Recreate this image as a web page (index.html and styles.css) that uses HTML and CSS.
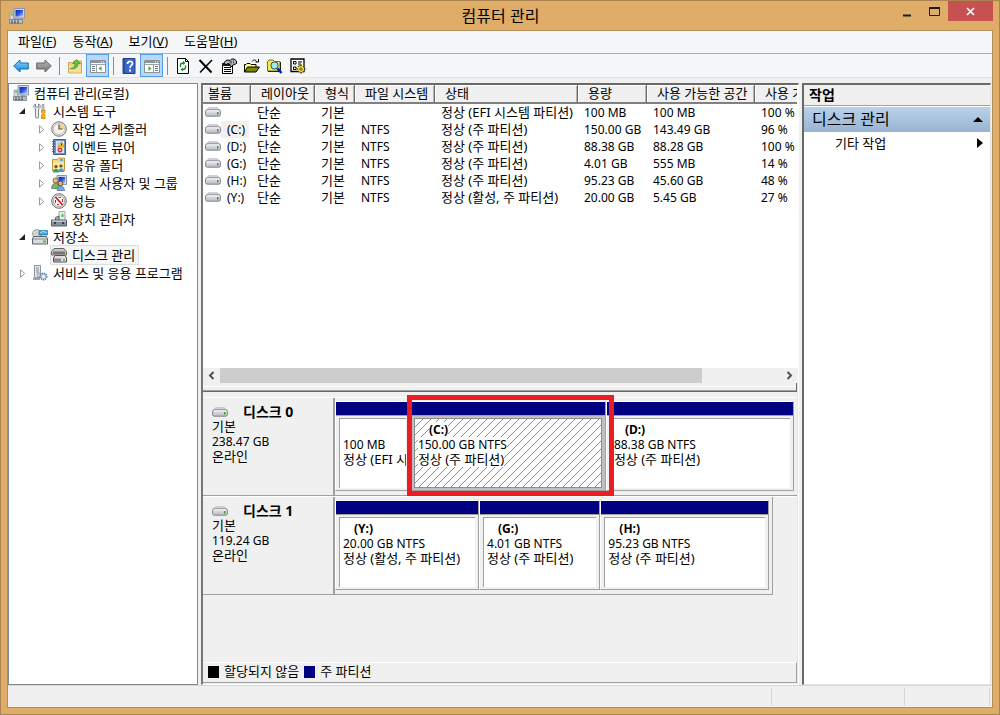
FILE: index.html
```html
<!DOCTYPE html>
<html lang="ko">
<head>
<meta charset="utf-8">
<title>컴퓨터 관리</title>
<link rel="stylesheet" href="styles.css">
</head>
<body>
<svg class="defs" aria-hidden="true">
  <defs>
    <linearGradient id="g-blue" x1="0" y1="0" x2="0" y2="1"><stop offset="0" stop-color="#8fd6fb"/><stop offset="1" stop-color="#1583d6"/></linearGradient>
    <linearGradient id="g-gray" x1="0" y1="0" x2="0" y2="1"><stop offset="0" stop-color="#b5b5b5"/><stop offset="1" stop-color="#777"/></linearGradient>
    <linearGradient id="g-screen" x1="0" y1="0" x2="1" y2="1"><stop offset="0" stop-color="#1226b8"/><stop offset=".5" stop-color="#2a50e0"/><stop offset="1" stop-color="#b8d4ff"/></linearGradient>
    <linearGradient id="g-drive" x1="0" y1="0" x2="0" y2="1"><stop offset="0" stop-color="#e9e9ee"/><stop offset="1" stop-color="#b9bac4"/></linearGradient>
    <pattern id="hatch" width="8" height="8" patternUnits="userSpaceOnUse"><path d="M-1 9 9-1M-1 1 1-1M7 9 9 7" stroke="#8c8c8c" stroke-width="1"/></pattern>
    <symbol id="i-computer" viewBox="0 0 16 16">
      <path d="M5 .5h10.500v9.500H5z" fill="#c9d3e2" stroke="#8b98ae"/><path d="M6.500 2H14v6.500H6.500z" fill="url(#g-screen)"/>
      <path d="M8 10h4v2H8z" fill="#9aa3ae"/><path d="M1 5h3.500v7H1z" fill="#d5dbe2" stroke="#8e979f" stroke-width=".7"/><path d="M2 6h2v1.500H2z" fill="#55c83a"/>
      <path d="M.5 11.500h13v4H.5z" fill="#b6bec6" stroke="#717b85" stroke-width=".8"/><path d="M2 13h9M2 14.500h9" stroke="#59636d" stroke-dasharray="2 1"/>
    </symbol>
    <symbol id="i-tools" viewBox="0 0 16 16">
      <path d="M3.500 1C2 1.500 1.500 3 2 4.500l1.500 1.500v8c0 1.500 3 1.500 3 0V6L8 4.500C8.500 3 8 1.500 6.500 1v3h-3z" fill="#eceef0" stroke="#747a80" stroke-width=".9"/>
      <path d="M10 1.500h2v6.500h-2z" fill="#d4d4d4" stroke="#888" stroke-width=".7"/><path d="M9.500 7.500h3.500v2l-1 1 1 1.500v3.500H9.500V12l1-1.500-1-1z" fill="#f9b516" stroke="#c78700" stroke-width=".8"/>
    </symbol>
    <symbol id="i-clock" viewBox="0 0 16 16">
      <circle cx="8" cy="8" r="7.300" fill="#e4e4e4" stroke="#767676"/><circle cx="8" cy="8" r="5.500" fill="#f8f3e6" stroke="#aaa" stroke-width=".6"/><path d="M8 8V2.500A5.500 5.500 0 0 1 13.500 8z" fill="#f3cf94"/><path d="M8 3.500V8h3.500" fill="none" stroke="#555" stroke-width="1.200"/>
    </symbol>
    <symbol id="i-event" viewBox="0 0 16 16">
      <path d="M2.500.5h12v15h-12z" fill="#6f93c8" stroke="#3c5d8f"/><path d="M5 2h8v12H5z" fill="#dfe8f5"/><path d="M6 4h3M6 6h2M6 8h2" stroke="#8fa6c8" stroke-width=".8"/><path d="M1 2.500h3M1 5h3M1 7.500h3M1 10h3M1 12.500h3" stroke="#56606c"/>
      <path d="M10.500 2.500 13.500 8h-6z" fill="#ffc820" stroke="#a87a00" stroke-width=".5"/><path d="M10.500 4.500v2" stroke="#222"/><circle cx="9" cy="11" r="2.500" fill="#dc3935"/><path d="M7.800 11h2.400" stroke="#fff"/>
    </symbol>
    <symbol id="i-share" viewBox="0 0 16 16">
      <path d="M1.500 2.500h5l1-1.500h6v13h-12z" fill="#f4d67a" stroke="#c19b3a"/><path d="M9 2h3v2H9z" fill="#5fa8e0"/><path d="M2 5h11v8H2z" fill="#fae79f"/>
      <circle cx="5" cy="9.500" r="1.600" fill="#6b4a2c"/><path d="M2 15.500c0-5 6-5 6 0z" fill="#3d9a78"/><circle cx="10" cy="9" r="1.600" fill="#6b4a2c"/><path d="M7.500 15c0-5 5.500-5 5.500 0z" fill="#4b9dc4"/>
    </symbol>
    <symbol id="i-users" viewBox="0 0 16 16">
      <path d="M6 .5h9.500v9H6z" fill="#ccd7e8" stroke="#8595b0"/><path d="M7.500 2H14v6H7.500z" fill="url(#g-screen)"/>
      <circle cx="4.500" cy="5.500" r="2.500" fill="#e9bd82" stroke="#765027" stroke-width=".8"/><path d="M.5 13.500c0-7 8-7 8 0z" fill="#78b56f" stroke="#39713a" stroke-width=".6"/><circle cx="9.500" cy="8.500" r="2.400" fill="#e3ae72" stroke="#5d3c20" stroke-width=".8"/><path d="M6 15.500c0-6 7.500-6 7.500 0z" fill="#7ba4d6" stroke="#365f96" stroke-width=".6"/>
    </symbol>
    <symbol id="i-perf" viewBox="0 0 16 16">
      <circle cx="8" cy="8" r="7.300" fill="#e6e6e6" stroke="#6e6e6e"/><circle cx="8" cy="8" r="5.500" fill="#fff" stroke="#8f8f8f" stroke-width=".8"/><path d="m4.500 4 7 8" stroke="#cf1a20" stroke-width="1.800"/><path d="M4.500 10V7M11.500 9V6M7.500 4.500H10M6 11.500h2" stroke="#cf1a20"/>
    </symbol>
    <symbol id="i-device" viewBox="0 0 16 16">
      <path d="M8 .5h6v9H8z" fill="#e8ebee" stroke="#a0a8af"/><path d="M10.500 3h2v3h-2z" fill="#55bf50"/><path d="M4.500 9V6.500L8 5v4" fill="#a6aeb5" stroke="#5c656e"/><path d="M.5 9h15v6H.5z" fill="#87919b" stroke="#56606a"/><path d="M1 9.500h14v1.500H1z" fill="#bfc7ce"/><path d="M3 11h2v2H3zM11 11h2v2h-2z" fill="#39424b"/>
    </symbol>
    <symbol id="i-storage" viewBox="0 0 16 16">
      <circle cx="5" cy="5" r="4.300" fill="#ddd" stroke="#8e8e8e"/><circle cx="5" cy="5" r="1.300" fill="#fff" stroke="#888" stroke-width=".5"/><path d="M7 1.500h8.500v4.500H7z" fill="#39a4d8" stroke="#2177a5" stroke-width=".7"/><path d="m8 4 3-1.500 3.500 1" fill="none" stroke="#b5e4fa"/><path d="M1.500 7.500h13l1 2.500v5H.5v-5z" fill="#d9dcde" stroke="#5c6165"/><path d="M1 10h14" stroke="#8b9094"/><path d="M11 11.500h3v2h-3z" fill="#4fc12c"/>
    </symbol>
    <symbol id="i-disks" viewBox="0 0 16 16">
      <path d="M3 1.500h10l2.500 3v3.500H.5V4.500z" fill="#c4c4c4" stroke="#666"/><path d="M2 4.500h12V7H2z" fill="#757575"/><path d="M4 8.500h10l1.500 2.500v4H2.500v-4z" fill="#dedede" stroke="#555"/><path d="M3 11.500h7v3H3z" fill="#8a8a8a"/><path d="M12 12h2v1.500h-2z" fill="#4fb430"/>
    </symbol>
    <symbol id="i-services" viewBox="0 0 16 16">
      <path d="M2.500.5h6v12h-6z" fill="#e5e9ed" stroke="#8b949d"/><path d="M4 3h3M4 5h3M4 7h3" stroke="#7f8992"/><path d="M1 12.500h7v2.500H1z" fill="#9aa4ad"/><circle cx="7" cy="10" r="2" fill="#c2cfdb" stroke="#6d8499" stroke-dasharray="1 1"/><circle cx="11.500" cy="11.500" r="3.300" fill="#b4c9dc" stroke="#5c7c9a" stroke-width="1.400" stroke-dasharray="1.300 .9"/><circle cx="11.500" cy="11.500" r="1.200" fill="#fff"/>
    </symbol>
    <symbol id="i-drive" viewBox="0 0 16 10">
      <path d="M3.500.8h9L15 4H1z" fill="#dcdce0" stroke="#a9aab0" stroke-width=".7"/><rect x=".5" y="2.800" width="15" height="6.400" rx="1.800" fill="url(#g-drive)" stroke="#85868e"/><path d="M2 3.800h12" stroke="#fff" stroke-width=".8"/><path d="M12 5h1.500v2.500H12z" fill="#2fa51d"/>
    </symbol>
    <symbol id="i-back" viewBox="0 0 16 16"><path d="M.7 8 7 2v3h8.300v6H7v3z" fill="url(#g-blue)" stroke="#1a6cb0"/></symbol>
    <symbol id="i-forward" viewBox="0 0 16 16"><path d="M15.300 8 9 2v3H.7v6H9v3z" fill="url(#g-gray)" stroke="#686868"/></symbol>
    <symbol id="i-up" viewBox="0 0 16 16"><path d="M1.500 4.500h4L7 3h7.500v12h-13z" fill="#f2d27b" stroke="#cfa75a"/><path d="M2 8h12v6.500H2z" fill="#f8dc94"/><path d="M3 10.500c3 0 5-2 5-5H5.500L9.500 1.500l4 4H11c0 4-3 6.500-8 5z" fill="#55c83f" stroke="#2b8b22" stroke-width=".6"/></symbol>
    <symbol id="i-pane-left" viewBox="0 0 16 16"><path d="M.5 2.500h15v12H.5z" fill="#fff" stroke="#88939d"/><path d="M1 3h14v2H1z" fill="#8d969e"/><path d="M11 4h3" stroke="#fff" stroke-dasharray="1 1"/><path d="M1 6.500h14M6.500 6v8" stroke="#9ba4ac"/><path d="M2 8.500h3M2 10.500h3M2 12.500h3" stroke="#6f7d8a"/><path d="M11.500 8v5L8.500 10.500z" fill="#3ead32"/></symbol>
    <symbol id="i-pane-right" viewBox="0 0 16 16"><path d="M.5 2.500h15v12H.5z" fill="#fff" stroke="#88939d"/><path d="M1 3h14v2H1z" fill="#8d969e"/><path d="M11 4h3" stroke="#fff" stroke-dasharray="1 1"/><path d="M1 6.500h14M9.500 6v8" stroke="#9ba4ac"/><path d="M11 8.500h3M11 10.500h3M11 12.500h3" stroke="#6f7d8a"/><path d="M4.500 8v5l3-2.500z" fill="#3ead32"/></symbol>
    <symbol id="i-help" viewBox="0 0 16 16"><path d="M2 .5h12v15H2z" fill="#3c67c8" stroke="#243f8c"/><path d="M2.500 1H4v14H2.500z" fill="#2a4aa0"/><path d="M6.500 6c0-3.500 5-3.500 5-.5 0 2-2.500 2-2.500 4.500" fill="none" stroke="#fff" stroke-width="1.700"/><path d="M8 11.500h2v2H8z" fill="#fff"/></symbol>
    <symbol id="i-refresh" viewBox="0 0 16 16"><path d="M2.500.5h8l3 3v12h-11z" fill="#fff" stroke="#000"/><path d="M10.500.5v3h3" fill="none" stroke="#000"/><path d="M5.500 9V7c0-1.500 1-2 3-2M10.500 7.500v2c0 1.500-1 2-3 2" fill="none" stroke="#138a26" stroke-width="1.400"/><path d="M8 3v4l2.500-2zM8 9.500v4l-2.500-2z" fill="#138a26"/></symbol>
    <symbol id="i-delete" viewBox="0 0 16 16"><path d="m1.500 2 12 12.500" stroke="#000" stroke-width="2"/><path d="M14 2 2 14.500" stroke="#000" stroke-width="1.500"/></symbol>
    <symbol id="i-props" viewBox="0 0 16 16"><path d="M1.500 5.500h10v10h-10z" fill="#fff" stroke="#000"/><path d="M1 5h8v3H1z" fill="#222"/><path d="M3 9.500h7M3 11.500h7M3 13.500h7" stroke="#000"/><path d="M3 4.500 6 2l3 .5L10.500 1H13l2.500 2v2.500L12 7l-2 2-1.500-3-2-.5L5 7z" fill="#b9b9b9" stroke="#000"/><path d="M8 4h3M10 2.500v4M12.500 2.500v3" stroke="#444" stroke-width=".8"/></symbol>
    <symbol id="i-open" viewBox="0 0 16 16"><path d="M.5 14V6.500H2l1-1h3l1 1h5v3" fill="#ffff8a" stroke="#000"/><path d="m.5 14 3-5h12L12 14z" fill="#858500" stroke="#000"/><path d="M8 3.500C10 1 12 2 13 4M11.500 4h3V1" fill="none" stroke="#000"/></symbol>
    <symbol id="i-find" viewBox="0 0 16 16"><path d="M.5 13V3.500L2 2h4l1.500 1.500H13V13z" fill="#f5e95a" stroke="#777700"/><path d="M1 13.500h12.500V4" fill="none" stroke="#222"/><circle cx="7.500" cy="7.500" r="3.600" fill="#8ef4f8" stroke="#444"/><path d="m10.500 10.500 4 4.500" stroke="#001ca8" stroke-width="2.500"/></symbol>
    <symbol id="i-settings" viewBox="0 0 16 16"><path d="M1 1h13v12.500H1z" fill="#fff" stroke="#000" stroke-width="1.300"/><path d="M3.500 3.500H6V6H3.500zM3.500 9H6v2.500H3.500z" fill="#fff" stroke="#000"/><path d="M8 4h4M8 6h3M9 8h3" stroke="#000" stroke-width="1.200"/><path d="M11 6.500v9M6.500 11h9M8 8l6 6M14 8l-6 6" stroke="#4a4200" stroke-width="1.600"/><circle cx="11" cy="11" r="3" fill="#ffe61c"/><circle cx="11" cy="11" r="1.200" fill="#fff" stroke="#222" stroke-width=".8"/></symbol>
  </defs>
</svg>

<div class="window">
  <header class="titlebar">
    <svg class="icon"><use href="#i-computer"/></svg>
    <h1 class="title">컴퓨터 관리</h1>
    <div class="controls">
      <button class="control" aria-label="최소화"><svg width="11" height="11"><path d="M1 9.500h8" stroke="#1e1e1e" stroke-width="2"/></svg></button>
      <button class="control" aria-label="최대화"><svg width="11" height="11"><path d="M.5 2v7.500h10V2z" fill="none" stroke="#1e1e1e"/><path d="M0 2h11" stroke="#1e1e1e" stroke-width="2"/></svg></button>
      <button class="control close" aria-label="닫기"><svg width="9" height="9"><path d="m1 1 7 7M8 1 1 8" stroke="#fff" stroke-width="1.700"/></svg></button>
    </div>
  </header>

  <div class="client">
    <nav class="menubar">
      <button>파일(<u>F</u>)</button><button>동작(<u>A</u>)</button><button>보기(<u>V</u>)</button><button>도움말(<u>H</u>)</button>
    </nav>
    <div class="toolbar" role="toolbar">
      <button aria-label="뒤로"><svg class="icon"><use href="#i-back"/></svg></button>
      <button aria-label="앞으로"><svg class="icon"><use href="#i-forward"/></svg></button>
      <span class="sep"></span>
      <button aria-label="위로"><svg class="icon"><use href="#i-up"/></svg></button>
      <button class="on" aria-label="콘솔 트리 표시"><svg class="icon"><use href="#i-pane-left"/></svg></button>
      <span class="sep"></span>
      <button aria-label="도움말"><svg class="icon"><use href="#i-help"/></svg></button>
      <button class="on" aria-label="작업 창 표시"><svg class="icon"><use href="#i-pane-right"/></svg></button>
      <span class="sep"></span>
      <button aria-label="새로 고침"><svg class="icon"><use href="#i-refresh"/></svg></button>
      <button aria-label="삭제"><svg class="icon"><use href="#i-delete"/></svg></button>
      <button aria-label="속성"><svg class="icon"><use href="#i-props"/></svg></button>
      <button aria-label="열기"><svg class="icon"><use href="#i-open"/></svg></button>
      <button aria-label="찾기"><svg class="icon"><use href="#i-find"/></svg></button>
      <button aria-label="설정"><svg class="icon"><use href="#i-settings"/></svg></button>
    </div>

    <main class="panes">
      <aside class="tree">
        <ul>
          <li class="root"><svg class="icon"><use href="#i-computer"/></svg><span class="name">컴퓨터 관리(로컬)</span></li>
          <li><button class="twist" aria-label="축소"><svg width="7" height="7"><path d="M6 0v6H0z" fill="#222"/></svg></button><svg class="icon"><use href="#i-tools"/></svg><span class="name">시스템 도구</span></li>
          <li class="sub"><button class="twist" aria-label="확장"><svg width="6" height="9"><path d="m.5.8 4.200 3.700L.5 8.200z" fill="#fff" stroke="#999"/></svg></button><svg class="icon"><use href="#i-clock"/></svg><span class="name">작업 스케줄러</span></li>
          <li class="sub"><button class="twist" aria-label="확장"><svg width="6" height="9"><path d="m.5.8 4.200 3.700L.5 8.200z" fill="#fff" stroke="#999"/></svg></button><svg class="icon"><use href="#i-event"/></svg><span class="name">이벤트 뷰어</span></li>
          <li class="sub"><button class="twist" aria-label="확장"><svg width="6" height="9"><path d="m.5.8 4.200 3.700L.5 8.200z" fill="#fff" stroke="#999"/></svg></button><svg class="icon"><use href="#i-share"/></svg><span class="name">공유 폴더</span></li>
          <li class="sub"><button class="twist" aria-label="확장"><svg width="6" height="9"><path d="m.5.8 4.200 3.700L.5 8.200z" fill="#fff" stroke="#999"/></svg></button><svg class="icon"><use href="#i-users"/></svg><span class="name">로컬 사용자 및 그룹</span></li>
          <li class="sub"><button class="twist" aria-label="확장"><svg width="6" height="9"><path d="m.5.8 4.200 3.700L.5 8.200z" fill="#fff" stroke="#999"/></svg></button><svg class="icon"><use href="#i-perf"/></svg><span class="name">성능</span></li>
          <li class="sub"><span class="twist"></span><svg class="icon"><use href="#i-device"/></svg><span class="name">장치 관리자</span></li>
          <li><button class="twist" aria-label="축소"><svg width="7" height="7"><path d="M6 0v6H0z" fill="#222"/></svg></button><svg class="icon"><use href="#i-storage"/></svg><span class="name">저장소</span></li>
          <li class="sub"><span class="twist"></span><span class="selected"><svg class="icon"><use href="#i-disks"/></svg><span class="name">디스크 관리</span></span></li>
          <li><button class="twist" aria-label="확장"><svg width="6" height="9"><path d="m.5.8 4.200 3.700L.5 8.200z" fill="#fff" stroke="#999"/></svg></button><svg class="icon"><use href="#i-services"/></svg><span class="name">서비스 및 응용 프로그램</span></li>
        </ul>
      </aside>

      <section class="center">
        <div class="volumes">
          <div class="table-wrap">
            <table>
              <colgroup><col class="c-vol"><col class="c-layout"><col class="c-type"><col class="c-fs"><col class="c-status"><col class="c-cap"><col class="c-free"><col class="c-pct"></colgroup>
              <thead><tr><th>볼륨</th><th>레이아웃</th><th>형식</th><th>파일 시스템</th><th>상태</th><th>용량</th><th>사용 가능한 공간</th><th>사용 가</th></tr></thead>
              <tbody>
                <tr><td><svg class="drive"><use href="#i-drive"/></svg></td><td>단순</td><td>기본</td><td></td><td>정상 (EFI 시스템 파티션)</td><td class="num">100 MB</td><td class="num">100 MB</td><td class="num">100 %</td></tr>
                <tr><td><svg class="drive"><use href="#i-drive"/></svg><span class="letter focus">(C:)</span></td><td>단순</td><td>기본</td><td class="num">NTFS</td><td>정상 (주 파티션)</td><td class="num">150.00 GB</td><td class="num">143.49 GB</td><td class="num">96 %</td></tr>
                <tr><td><svg class="drive"><use href="#i-drive"/></svg><span class="letter">(D:)</span></td><td>단순</td><td>기본</td><td class="num">NTFS</td><td>정상 (주 파티션)</td><td class="num">88.38 GB</td><td class="num">88.28 GB</td><td class="num">100 %</td></tr>
                <tr><td><svg class="drive"><use href="#i-drive"/></svg><span class="letter">(G:)</span></td><td>단순</td><td>기본</td><td class="num">NTFS</td><td>정상 (주 파티션)</td><td class="num">4.01 GB</td><td class="num">555 MB</td><td class="num">14 %</td></tr>
                <tr><td><svg class="drive"><use href="#i-drive"/></svg><span class="letter">(H:)</span></td><td>단순</td><td>기본</td><td class="num">NTFS</td><td>정상 (주 파티션)</td><td class="num">95.23 GB</td><td class="num">45.60 GB</td><td class="num">48 %</td></tr>
                <tr><td><svg class="drive"><use href="#i-drive"/></svg><span class="letter">(Y:)</span></td><td>단순</td><td>기본</td><td class="num">NTFS</td><td>정상 (활성, 주 파티션)</td><td class="num">20.00 GB</td><td class="num">5.45 GB</td><td class="num">27 %</td></tr>
              </tbody>
            </table>
          </div>
          <div class="scrollbar">
            <button aria-label="왼쪽으로"><svg width="7" height="9"><path d="M5.500 1 2 4.500 5.500 8" fill="none" stroke="#505050" stroke-width="2"/></svg></button>
            <div class="track"><div class="thumb"></div></div>
            <button aria-label="오른쪽으로"><svg width="7" height="9"><path d="M1.500 1 5 4.500 1.500 8" fill="none" stroke="#505050" stroke-width="2"/></svg></button>
          </div>
        </div>
        <div class="splitter"></div>
        <div class="disks">
          <div class="disk">
            <div class="disk-label">
              <h2><svg class="drive"><use href="#i-drive"/></svg>디스크 0</h2>
              <p>기본</p><p class="num">238.47 GB</p><p>온라인</p>
            </div>
            <div class="map wide">
              <div class="part p-efi"><div class="bar"></div><div class="body"><h3></h3><p class="num">100 MB</p><p>정상 (EFI 시</p></div></div>
              <div class="part p-c marked"><div class="bar"></div><div class="body"><svg class="hatch" width="100%" height="100%"><rect width="100%" height="100%" fill="url(#hatch)"/></svg><h3><span>(C:)</span></h3><p class="num"><span>150.00 GB NTFS</span></p><p><span>정상 (주 파티션)</span></p></div></div>
              <div class="part p-d"><div class="bar"></div><div class="body"><h3>(D:)</h3><p class="num">88.38 GB NTFS</p><p>정상 (주 파티션)</p></div></div>
            </div>
          </div>
          <div class="disk">
            <div class="disk-label">
              <h2><svg class="drive"><use href="#i-drive"/></svg>디스크 1</h2>
              <p>기본</p><p class="num">119.24 GB</p><p>온라인</p>
            </div>
            <div class="map short">
              <div class="part p-y"><div class="bar"></div><div class="body"><h3>(Y:)</h3><p class="num">20.00 GB NTFS</p><p>정상 (활성, 주 파티션)</p></div></div>
              <div class="part p-g"><div class="bar"></div><div class="body"><h3>(G:)</h3><p class="num">4.01 GB NTFS</p><p>정상 (주 파티션)</p></div></div>
              <div class="part p-h"><div class="bar"></div><div class="body"><h3>(H:)</h3><p class="num">95.23 GB NTFS</p><p>정상 (주 파티션)</p></div></div>
            </div>
          </div>
        </div>
        <div class="legend"><span class="key black"></span><span>할당되지 않음</span><span class="key navy"></span><span>주 파티션</span></div>
      </section>

      <aside class="actions">
        <h2>작업</h2>
        <button class="group">디스크 관리<svg width="10" height="5"><path d="m0 5 5-5 5 5z"/></svg></button>
        <button class="more">기타 작업<svg width="6" height="10"><path d="m0 0 6 5-6 5z"/></svg></button>
      </aside>
    </main>

    <footer class="statusbar"><span></span><span></span><span></span></footer>
  </div>
</div>
</body>
</html>
```
FILE: styles.css
```css
* { box-sizing: border-box; }

body {
  margin: 0;
  height: 100vh;
  overflow: hidden;
  font: 13px/15px "Noto Sans", "Noto Sans CJK KR", sans-serif;
  color: #000;
}

h1, h2, h3, p, ul { margin: 0; padding: 0; }
ul { list-style: none; }
svg { flex: none; }

button {
  margin: 0;
  padding: 0;
  border: 0;
  background: none;
  font: inherit;
  color: inherit;
}

.defs { position: absolute; width: 0; height: 0; }
.icon { display: block; width: 16px; height: 16px; }
.drive { display: inline-block; width: 16px; height: 10px; }
.num { font-size: 12px; }

/* Window frame */
.window {
  display: flex;
  flex-direction: column;
  height: 100vh;
  padding: 0 6px 6px;
  border: 1px solid #a98450;
  background: #dfad68;
}

.titlebar {
  display: grid;
  grid-template-columns: 1fr auto 1fr;
  align-items: center;
  height: 29px;
  padding: 0 1px 0 2px;
}
.title { font-size: 16px; line-height: 24px; font-weight: 400; }
.controls { display: flex; align-self: start; justify-content: flex-end; height: 20px; }
.control { display: flex; align-items: center; justify-content: center; width: 27px; }
.control.close { width: 45px; margin-right: -1px; background: #c75050; }

.client {
  display: flex;
  flex: 1;
  flex-direction: column;
  min-height: 0;
  border: 1px solid #b58f58;
  background: #f0f0f0;
}

.menubar {
  display: flex;
  gap: 16px;
  height: 23px;
  padding: 0 10px 2px;
  border-bottom: 1px solid #aeb0b2;
  background: #f5f6f7;
}

.toolbar {
  display: flex;
  height: 24px;
  padding-left: 1px;
  border-bottom: 1px solid #e3e3e3;
  background: #f5f6f7;
}
.toolbar button { display: flex; align-items: center; justify-content: center; width: 23px; height: 23px; }
.toolbar .on { border: 1px solid #569de5; background: #b8d8f9; }
.sep { width: 8px; height: 18px; margin: 3px 0; background: linear-gradient(#8d8d8d, #8d8d8d) center / 1px 100% no-repeat; }

.panes {
  display: grid;
  grid-template-columns: 190px minmax(0, 1fr) 189px;
  gap: 3px;
  flex: 1;
  min-height: 0;
  padding: 5px 1px 0 0;
}

/* Console tree */
.tree { overflow: hidden; border: 1px solid #828790; background: #fff; }
.tree li { display: flex; align-items: center; height: 18px; padding-left: 8px; white-space: nowrap; }
.tree .root { padding-left: 4px; }
.tree .sub { padding-left: 27px; }
.tree .name { padding-left: 5px; }
.twist { display: flex; align-items: center; justify-content: center; width: 11px; height: 18px; margin-right: 4px; }
.selected { display: flex; align-items: center; height: 18px; padding-right: 3px; outline: 1px solid #dedede; background: #f5f5f5; }

/* Volume list */
.center {
  display: flex;
  flex-direction: column;
  min-width: 0;
  border: 1px solid #fff;
  border-top: 2px solid #696969;
  border-left: 2px solid #75777a;
  box-shadow: inset -1px 0 #e3e3e3;
}
.volumes { display: flex; flex: 0 1 298px; flex-direction: column; background: #fff; }
.table-wrap { flex: 1; overflow: hidden; margin-right: 1px; }
table { width: 632px; border-spacing: 0; table-layout: fixed; white-space: nowrap; }
.c-vol { width: 48px; }
.c-layout { width: 64px; }
.c-type { width: 40px; }
.c-fs { width: 80px; }
.c-status { width: 143px; }
.c-cap { width: 69px; }
.c-free { width: 108px; }
.c-pct { width: 80px; }
th {
  height: 19px;
  padding: 0 0 0 10px;
  border-right: 1px solid #696969;
  border-bottom: 2px solid #808080;
  box-shadow: inset 1px 1px #fff, inset -1px 0 #b5b5b5;
  background: #f0f0f0;
  font-weight: 400;
  text-align: left;
}
th:first-child { padding-left: 5px; }
td { height: 17px; padding: 0 0 0 6px; }
td:first-child { padding-left: 2px; font-size: 12px; }
.letter { display: inline-block; padding: 0 4px 0 6px; line-height: 17px; }
.focus { background: #f0f0f0; }

.scrollbar { display: flex; height: 15px; background: #f0f0f0; }
.scrollbar button { display: flex; align-items: center; justify-content: center; width: 17px; }
.track { flex: 1; }
.thumb { width: 86%; height: 15px; background: #cdcdcd; }

.splitter {
  height: 9px;
  margin-right: 1px;
  border-right: 1px solid #696969;
  border-bottom: 1px solid #696969;
  background: linear-gradient(#fff, #fff) 0 3px / 100% 1px no-repeat, linear-gradient(#a0a0a0, #a0a0a0) 0 7px / 100% 1px no-repeat, #f0f0f0;
}

/* Disk maps */
.disks { flex: 1; min-height: 0; padding-top: 5px; margin-right: 1px; }
.disk { display: flex; height: 99px; border-top: 1px solid #fff; border-bottom: 1px solid #a0a0a0; }
.disk + .disk { border-bottom: 0; }
.disk-label { width: 132px; padding: 6px 9px; border-right: 2px solid #a0a0a0; }
.disk + .disk .disk-label { border-bottom: 1px solid #a0a0a0; }
.disk-label h2 { display: flex; align-items: center; gap: 15px; font-size: 14px; line-height: 15px; }
.map { display: flex; min-width: 0; padding: 3px 3px 4px 0; }
.map.wide { flex: 1; }
.map.short { width: 438px; border-right: 1px solid #a0a0a0; border-bottom: 1px solid #a0a0a0; }

.part {
  display: flex;
  flex-direction: column;
  min-width: 0;
  border: 1px solid #fff;
  border-right-color: #a0a0a0;
  border-bottom-color: #a0a0a0;
}
.bar { height: 14px; border-bottom: 1px solid #a0a0a0; background: #000080; }
.body {
  position: relative;
  flex: 1;
  overflow: hidden;
  margin: 2px 3px;
  padding: 3px 0 0 3px;
  border-top: 1px solid #a0a0a0;
  border-left: 1px solid #a0a0a0;
  background: #fff;
  white-space: nowrap;
}
.body h3 { height: 15px; padding-left: 11px; font-size: 12px; line-height: 15px; }
.p-efi { flex: 74 1 0; }
.p-c { flex: 197 1 0; }
.p-d { flex: 189 1 0; }
.p-y { flex: 144 1 0; }
.p-g { flex: 121 1 0; }
.p-h { flex: 169 1 0; }

.hatch { position: absolute; inset: 0; }
.body span { position: relative; display: inline-block; background: #fff; }
.marked { position: relative; background: #c0c0c0; }
.marked .body { border: 1px solid #8c8c8c; }
.marked::after {
  content: "";
  position: absolute;
  inset: -7px -9px -6px -4px;
  z-index: 1;
  border: 5px solid #ed1c24;
}

.legend {
  display: flex;
  align-items: center;
  gap: 5px;
  height: 21px;
  margin: 0 1px 1px 0;
  padding: 0 0 2px 5px;
  border-top: 1px solid #fff;
  border-right: 1px solid #a0a0a0;
  border-bottom: 1px solid #a0a0a0;
}
.key { width: 11px; height: 12px; }
.black { background: #000; }
.navy { background: #000080; }

/* Actions pane */
.actions {
  display: flex;
  flex-direction: column;
  border: 1px solid #e3e3e3;
  border-top: 2px solid #696969;
  border-left: 2px solid #696969;
  background: #fff;
}
.actions h2 { height: 21px; padding-left: 5px; border-bottom: 1px solid #a0a0a0; background: #f0f0f0; font-size: 14px; line-height: 20px; }
.actions button { display: flex; align-items: center; justify-content: space-between; padding-right: 7px; text-align: left; }
.actions .group { height: 25px; margin-top: 1px; padding-left: 8px; background: linear-gradient(#b9d1ea, #99b4d1); font-size: 16px; }
.actions .more { height: 22px; padding-left: 31px; }

.statusbar { display: flex; height: 22px; padding: 2px 2px 1px 0; border-top: 1px solid #d7d7d7; }
.statusbar span { width: 133px; border-right: 1px solid #d7d7d7; }
.statusbar span:first-child { flex: 1; }
.statusbar span:last-child { width: 85px; }
```
